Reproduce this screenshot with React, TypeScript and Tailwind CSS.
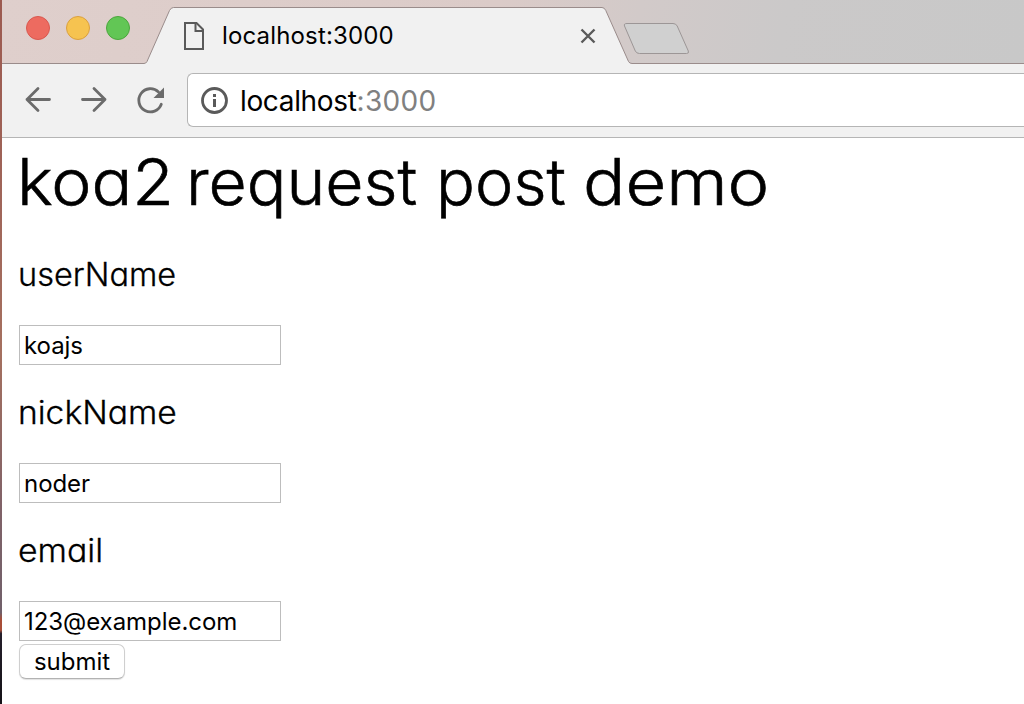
import React from "react";

function TabStrip() {
  return (
    <div className="relative h-16 bg-[linear-gradient(100deg,#dfcfcc_0%,#dbcbc8_48%,#d2cac9_62%,#cbc9c9_76%,#c8c8c8_100%)]">
      <svg className="absolute inset-0" width="1022" height="64" viewBox="2 0 1022 64" fill="none">
        <path d="M2 63.5H144Q146 63.5 147 61.5L169.500 10.500Q171 7.500 173.500 7.500H602Q604.500 7.500 605.800 10.500L628.500 61.500Q629.500 63.500 632 63.500H1024V65H2Z" fill="#f1f1f1" />
        <path d="M2 63.5H144Q146 63.5 147 61.5L169.500 10.500Q171 7.500 173.500 7.500H602Q604.500 7.500 605.800 10.500L628.500 61.500Q629.500 63.500 632 63.500H1024" stroke="#9a8c8b" />
        <path d="M627 23.500H673Q676 23.500 677.200 26L688.300 51Q689.300 53.500 686.500 53.500H639.500Q636.500 53.500 635.300 51L624.500 26Q623.500 23.500 627 23.500Z" fill="#d0d0d0" stroke="#9c9696" />
      </svg>
      <div className="relative flex h-full items-start">
        <div className="flex gap-4 pl-6 pt-4">
          <span className="size-6 rounded-full border border-[#d9584f] bg-[#ed6b60]" />
          <span className="size-6 rounded-full border border-[#dba03f] bg-[#f6c350]" />
          <span className="size-6 rounded-full border border-[#4ca63d] bg-[#62c655]" />
        </div>
        <svg className="ml-[53px] mt-[21px]" width="22" height="30" viewBox="0 0 22 30" fill="none" stroke="#5a5a5a" strokeWidth="2">
          <path d="M2 2H13.500L20 8.500V28H2Z" />
          <path d="M12.500 2V10H20" />
        </svg>
        <span className="ml-[17px] mt-[18px] w-[180px] whitespace-nowrap text-[24px] leading-9 tracking-[0.15px]">localhost:3000</span>
        <svg className="ml-[178px] mt-[28px]" width="16" height="16" viewBox="0 0 16 16" stroke="#5a5a5a" strokeWidth="2.400">
          <path d="M1.500 1.500L14.500 14.500M14.500 1.500L1.500 14.500" />
        </svg>
      </div>
    </div>
  );
}

function Toolbar() {
  return (
    <div className="flex h-[74px] items-start border-b border-[#b5b5b5] bg-[#f1f1f1]">
      <svg className="ml-[22px] mt-[22px]" width="28" height="28" viewBox="0 0 28 28" fill="none" stroke="#6b6b6b" strokeWidth="2.800" strokeLinecap="round" strokeLinejoin="round">
        <path d="M25.500 13.500H3M14 2.500L3 13.500L14 24.500" />
      </svg>
      <svg className="ml-[28px] mt-[22px]" width="28" height="28" viewBox="0 0 28 28" fill="none" stroke="#6b6b6b" strokeWidth="2.800" strokeLinecap="round" strokeLinejoin="round">
        <path d="M2.500 13.500H25M14 2.500L25 13.500L14 24.500" />
      </svg>
      <svg className="ml-[28px] mt-[22px]" width="30" height="30" viewBox="0 0 30 30" fill="none">
        <path d="M25.300 18.300A11.600 11.600 0 1 1 22.500 6" stroke="#6b6b6b" strokeWidth="2.800" strokeLinecap="round" />
        <path d="M28 1.500V12H17.500Z" fill="#6b6b6b" />
      </svg>
      <div className="ml-[21px] mt-[9px] flex h-[54px] flex-1 items-start rounded-l-[6px] border border-r-0 border-[#b5b5b5] bg-white">
        <svg className="ml-[12px] mt-[12px]" width="30" height="30" viewBox="0 0 30 30" fill="none">
          <circle cx="14.500" cy="14.500" r="12" stroke="#5a5a5a" strokeWidth="2.800" />
          <path d="M13 8H16V11H13ZM13 13H16V21H13Z" fill="#5a5a5a" />
        </svg>
        <span className="ml-[10px] mt-[9px] whitespace-nowrap text-[28px] leading-9 tracking-[-0.35px]">
          localhost<span className="tracking-[0.35px] text-[#808080]">:3000</span>
        </span>
      </div>
    </div>
  );
}

function Field({ label, value, labelClass }: { label: string; value: string; labelClass: string }) {
  return (
    <div className="h-[138px]">
      <p className="h-[68px] whitespace-nowrap text-[32px] leading-9 font-light [-webkit-text-stroke:0.3px_black] [font-feature-settings:'cv11']">
        <span className={"-ml-px inline-block origin-left " + labelClass}>{label}</span>
      </p>
      <input
        className="block h-10 w-[262px] border border-[#bdbdbd] bg-white pl-1 text-[24px] tracking-[-0.05px] outline-none"
        type="text"
        defaultValue={value}
      />
    </div>
  );
}

export default function App() {
  return (
    <div className="flex h-[704px] w-[1024px] overflow-hidden bg-white font-['Inter',sans-serif] text-black">
      <div className="w-[2px] shrink-0 bg-[linear-gradient(180deg,#9c5a50_0%,#a0665a_30%,#a5705f_50%,#806268_72%,#70606a_87%,#a84e38_88%,#a84e38_89.500%,#251f2b_90%,#141217_100%)]" />
      <div className="flex min-w-0 flex-1 flex-col">
        <TabStrip />
        <Toolbar />
        <main className="pl-[17px]">
          <h1 className="flex h-[119px] pt-[2px] whitespace-nowrap text-[64px] leading-[84px] font-light [-webkit-text-stroke:0.6px_black] [font-feature-settings:'cv11']">
            <span className="w-[167px]"><span className="-ml-[2px] inline-block origin-left scale-x-[1.06]">koa2</span></span>
            <span className="w-[250px]"><span className="inline-block origin-left scale-x-[1.03]">request</span></span>
            <span className="w-[147px]"><span className="inline-block origin-left scale-x-[1.01]">post</span></span>
            <span className="inline-block origin-left scale-x-[1.1]">demo</span>
          </h1>
          <form onSubmit={(e) => e.preventDefault()}>
            <Field label="userName" value="koajs" labelClass="scale-x-[1.015]" />
            <Field label="nickName" value="noder" labelClass="scale-x-[1.05]" />
            <Field label="email" value="123@example.com" labelClass="scale-x-[1.055]" />
            <button className="-mt-[27px] block h-[35px] w-[106px] rounded-[7px] border border-[#cfcfcf] border-b-[#b2b2b2] bg-white text-[24px] leading-8 shadow-[0_1px_1px_rgba(0,0,0,0.12)]" type="submit">
              submit
            </button>
          </form>
        </main>
      </div>
    </div>
  );
}
